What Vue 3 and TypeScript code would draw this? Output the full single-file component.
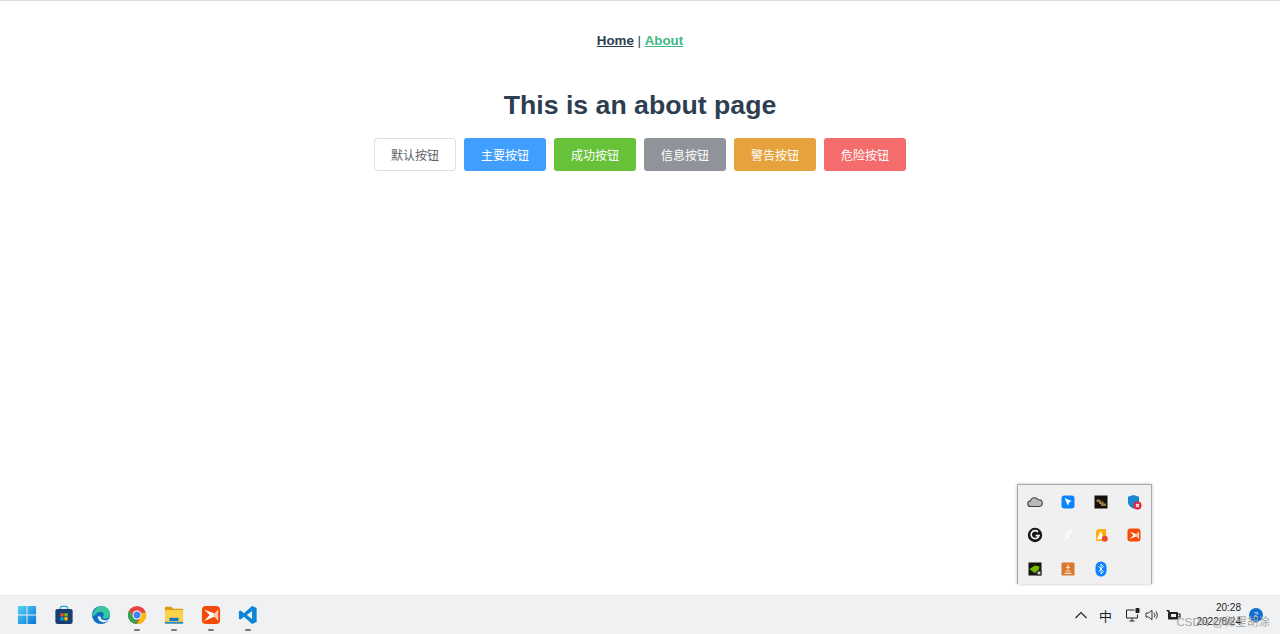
<script setup lang="ts">
const buttons = [
  { label: '默认按钮', kind: 'default' },
  { label: '主要按钮', kind: 'primary' },
  { label: '成功按钮', kind: 'success' },
  { label: '信息按钮', kind: 'info' },
  { label: '警告按钮', kind: 'warning' },
  { label: '危险按钮', kind: 'danger' },
]
</script>

<template>
  <div class="page">
    <main class="content">
      <nav class="nav">
        <a class="link home">Home</a><span class="sep"> | </span><a class="link about">About</a>
      </nav>
      <h1 class="title">This is an about page</h1>
      <div class="btns">
        <button v-for="b in buttons" :key="b.kind" class="btn" :class="b.kind">{{ b.label }}</button>
      </div>
    </main>

    <div class="tray-pop">
      <svg class="ti" viewBox="0 0 16 16"><path d="M3.800 12.500a2.800 2.800 0 0 1-.3-5.600A4.200 4.200 0 0 1 11.200 5.800a3.400 3.400 0 0 1 1.300 6.700z" fill="#b9b9b9" stroke="#444" stroke-width="1.100"/></svg>
      <svg class="ti" viewBox="0 0 16 16"><rect x="1.500" y="1.500" width="13" height="13" rx="3" fill="#0a84ff"/><path d="M4.500 4l7 3-2.500 1.500-1 3.500-1.500-3.500z" fill="#fff"/></svg>
      <svg class="ti" viewBox="0 0 16 16"><rect x="1.500" y="1.500" width="13" height="13" fill="#14110d"/><path d="M3.500 5.500h4v2h3v2h2.500v2.500H8v-2H6V8H3.500z" fill="#9a7b45"/></svg>
      <svg class="ti" viewBox="0 0 16 16"><path d="M7.500 1l5.500 1.800v5.400c0 3-2.500 5-5.500 6.500C4.500 13.200 2 11.200 2 8.200V2.800z" fill="#1a86d0"/><circle cx="11.500" cy="11.500" r="4" fill="#e81f3a"/><path d="M10 10l3 3M13 10l-3 3" stroke="#fff" stroke-width="1.100"/></svg>

      <svg class="ti" viewBox="0 0 16 16"><circle cx="8" cy="8" r="7.200" fill="#161616"/><path d="M11 4.800A4 4 0 1 0 12 8.600H8.600" fill="none" stroke="#f2f2f2" stroke-width="1.700"/></svg>
      <svg class="ti" viewBox="0 0 16 16"><path d="M11.500 1.500L5.500 7l1.200 1-2.700 6 4.500-3.500 1-1.500-1-1 3.500-3z" fill="#fcfcfc"/></svg>
      <svg class="ti" viewBox="0 0 16 16"><path d="M3 4l2-2h8v9l-2 3H3z" fill="#ffae12"/><path d="M3.500 12.500L8 4l2.500 8z" fill="#fff"/><circle cx="11.800" cy="11.800" r="3" fill="#ed4a2b"/></svg>
      <svg class="ti" viewBox="0 0 16 16"><rect x="1.500" y="1.500" width="13" height="13" rx="3" fill="#f44b0b"/><path d="M3.500 4.500L13 8.200 3.500 12l4-3.800z" fill="#fff"/><path d="M13 4.500v7.500l-4-3.800z" fill="#ffc9ad"/></svg>

      <svg class="ti" viewBox="0 0 16 16"><rect x="1.500" y="1.500" width="13" height="13" fill="#15170f"/><path d="M2.500 8l5.500-3.500 4.500 1-1 4-4 2.500z" fill="#76b900"/><rect x="9.500" y="9.500" width="5" height="5" fill="#3a3a3a"/><rect x="10.800" y="10.800" width="2.400" height="2.400" fill="#ddd"/></svg>
      <svg class="ti" viewBox="0 0 16 16"><rect x="1.500" y="1.500" width="13" height="13" rx="1" fill="#d9772c"/><path d="M4.500 12.300h7M5.500 10h5M8 3.500v5M6 6.500h4" stroke="#f7e3cf" stroke-width="1.200" fill="none"/></svg>
      <svg class="ti" viewBox="0 0 16 16"><rect x="2.500" y="0.500" width="11" height="15" rx="5.500" fill="#0a84ff"/><path d="M5.500 5.500l5 5L8 13V3l2.500 2.500-5 5" fill="none" stroke="#fff" stroke-width="0.900"/></svg>
    </div>

    <footer class="taskbar">
      <div class="apps">
        <span class="app">
          <svg viewBox="0 0 22 22" class="ai">
            <defs>
              <linearGradient id="win" x1="0" y1="0" x2="1" y2="1"><stop offset="0" stop-color="#52d2f7"/><stop offset="1" stop-color="#0a78d4"/></linearGradient>
            </defs>
            <path d="M1 2a1 1 0 0 1 1-1h8.500v9.500H1zM11.500 1H20a1 1 0 0 1 1 1v8.500h-9.500zM1 11.500h9.500V21H2a1 1 0 0 1-1-1zM11.500 11.500H21V20a1 1 0 0 1-1 1h-8.500z" fill="url(#win)"/>
          </svg>
        </span>
        <span class="app">
          <svg viewBox="0 0 22 22" class="ai"><path d="M7 5V3a1.500 1.500 0 0 1 1.500-1.500h5A1.500 1.500 0 0 1 15 3v2" fill="none" stroke="#2a9fd8" stroke-width="1.300"/><rect x="1.500" y="4.500" width="19" height="16.500" rx="2.500" fill="#173f73"/><rect x="7" y="9" width="3.600" height="3.600" fill="#f25022"/><rect x="11.400" y="9" width="3.600" height="3.600" fill="#7fba00"/><rect x="7" y="13.400" width="3.600" height="3.600" fill="#00a4ef"/><rect x="11.400" y="13.400" width="3.600" height="3.600" fill="#ffb900"/></svg>
        </span>
        <span class="app">
          <svg viewBox="0 0 22 22" class="ai"><circle cx="11" cy="11" r="10" fill="#0f6fc4"/><path d="M1.500 13C2 6 7 1 12 1c5.500 0 9 4.500 9 9.500 0 3-2.500 4.500-5 4.500-2 0-3.500-.8-3-2 .3-1 1.500-1.500 1-3.500C13.500 8 11.500 7 9.500 7.500 5 8.500 4 13 1.500 13z" fill="#37c8a0"/><path d="M7.500 12.500c0 4.500 3.500 7 7 6.500 2.500-.3 4.500-1.500 5.500-3.500-3 2-6.500 1.500-7.800.3C10.800 15 10.500 14 11 12.800z" fill="#eaf6ff"/></svg>
        </span>
        <span class="app dot">
          <svg viewBox="0 0 22 22" class="ai"><circle cx="11" cy="11" r="10" fill="#e8453c"/><path d="M11 21a10 10 0 0 1-8.660-15L7 13l4 2z" fill="#31a752"/><path d="M20.700 8.500A10 10 0 0 1 11 21l4-7 1-5.500z" fill="#fbbc05"/><circle cx="11" cy="11" r="5" fill="#fff"/><circle cx="11" cy="11" r="3.900" fill="#4285f4"/></svg>
        </span>
        <span class="app dot">
          <svg viewBox="0 0 22 22" class="ai"><path d="M1 3a1 1 0 0 1 1-1h6l2 2h10a1 1 0 0 1 1 1v3H1z" fill="#d99a0c"/><rect x="1" y="5.500" width="20" height="15" rx="1" fill="#fdd14a"/><rect x="6" y="14" width="10" height="3.500" rx=".5" fill="#1477c8"/><rect x="1" y="18.500" width="20" height="2" fill="#1b8ad6"/></svg>
        </span>
        <span class="app dot">
          <svg viewBox="0 0 22 22" class="ai"><rect x="1" y="1" width="20" height="20" rx="4.500" fill="#f24b09"/><path d="M3.500 5L19 11 3.500 17.500 9.500 11z" fill="#fff"/><path d="M19 5v12.500L13 11z" fill="#ffc9ad"/></svg>
        </span>
        <span class="app dot">
          <svg viewBox="0 0 22 22" class="ai"><path d="M15.500 1l5 2.400v15.200l-5 2.400L6.500 13 2.800 16 1 15V7l1.800-1 3.700 3z" fill="#0a86d8"/><path d="M15.500 6.500L9.600 11l5.900 4.500z" fill="#eff1f3"/></svg>
        </span>
      </div>
      <div class="sys">
        <svg class="si chev" viewBox="0 0 14 14"><path d="M1.500 10L7 4.500l5.500 5.500" fill="none" stroke="#222" stroke-width="1.100"/></svg>
        <span class="ime">中</span>
        <svg class="si net" viewBox="0 0 16 16"><path d="M9.500 3H1.500v8h11V7.500M4.500 14h5M7 11v3" fill="none" stroke="#222" stroke-width="1"/><rect x="10.500" y="1" width="4" height="5" rx=".8" fill="#222"/></svg>
        <svg class="si vol" viewBox="0 0 16 16"><path d="M2 6h2.500L8 3.300v9.400L4.500 10H2z" fill="none" stroke="#222" stroke-width=".9"/><path d="M10 5.800a3 3 0 0 1 0 4.400M11.800 4.200a5.500 5.500 0 0 1 0 7.600" fill="none" stroke="#222" stroke-width=".9"/></svg>
        <svg class="si bat" viewBox="0 0 16 16"><path d="M3 5l-2-2h3l1 2z" fill="#222"/><rect x="3" y="5" width="10" height="7.500" rx="1" fill="#222"/><rect x="6" y="7" width="5" height="3" fill="#eee"/><path d="M13 7h2v3h-2" stroke="#222" stroke-width="1.200" fill="none"/></svg>
        <div class="clock"><span>20:28</span><span>2022/6/24</span></div>
        <span class="badge">2</span>
      </div>
      <span class="mark">CSDN @稀里胡涂</span>
    </footer>
  </div>
</template>

<style>
html, body { margin: 0; background: #fff; }
</style>

<style scoped>
.page {
  position: relative;
  width: 1280px;
  height: 634px;
  overflow: hidden;
  display: flex;
  flex-direction: column;
  background: #fff;
  border-top: 1px solid #dcdcdc;
  box-sizing: border-box;
  font-family: "Liberation Sans", Arial, "Noto Sans CJK SC", sans-serif;
  color: #2c3e50;
}
.content { flex: 1; display: flex; flex-direction: column; align-items: center; }
.nav { margin-top: 31px; font-size: 13.330px; line-height: 17px; height: 17px; }
.link { font-weight: 700; text-decoration: underline; }
.home { color: #2c3e50; }
.about { color: #42b983; }
.title { margin: 40px 0 0; font-size: 26.670px; line-height: 33px; font-weight: 700; }
.btns { display: flex; gap: 8px; margin-top: 16px; }
.btn {
  width: 82px;
  height: 33px;
  padding: 0;
  border-radius: 3px;
  border: 1px solid transparent;
  color: #fff;
  font-family: "Noto Sans CJK SC", sans-serif;
  font-size: 12px;
  box-sizing: border-box;
}
.default { background: #fff; border-color: #dcdfe6; color: #606266; }
.primary { background: #409eff; }
.success { background: #67c23a; }
.info { background: #909399; }
.warning { background: #e6a23c; }
.danger { background: #f56c6c; }
.taskbar {
  height: 39px;
  flex: none;
  background: #f0f1f2;
  border-top: 1px solid #e8e8e8;
  box-sizing: border-box;
  display: flex;
  align-items: center;
  justify-content: space-between;
  position: relative;
}
.apps { display: flex; gap: 16.830px; padding-left: 17px; }
.app { position: relative; width: 20px; height: 20px; display: block; }
.ai { width: 20px; height: 20px; display: block; }
.dot::after {
  content: "";
  position: absolute;
  left: 7px;
  bottom: -6px;
  width: 6px;
  height: 2px;
  border-radius: 1px;
  background: #7a7a7a;
}
.sys { display: flex; align-items: center; padding-right: 17px; color: #1c1c1c; }
.si { display: block; }
.chev { width: 14px; height: 14px; margin-right: 11px; }
.ime { font-family: "Noto Sans CJK SC", sans-serif; font-size: 13px; width: 14px; margin-right: 12px; }
.net { width: 16px; height: 16px; margin-right: 3px; }
.vol { width: 16px; height: 16px; margin-right: 5px; }
.bat { width: 16px; height: 16px; margin-right: 14px; }
.clock { display: flex; flex-direction: column; align-items: flex-end; font-size: 10px; line-height: 14px; width: 46px; }
.badge {
  width: 14px; height: 14px; margin-left: 8px; border-radius: 50%;
  background: #0f6cd0; color: #fff; font-size: 8px; line-height: 14px; text-align: center;
}
.mark {
  position: absolute;
  right: 10px;
  top: 19px;
  font-size: 11.500px;
  line-height: 14px;
  color: #a6a6a6;
  font-family: "Liberation Sans", "Noto Sans CJK SC", sans-serif;
}
.tray-pop {
  position: absolute;
  left: 1017px;
  top: 483px;
  width: 135px;
  height: 100px;
  box-sizing: border-box;
  background: #f0f0f0;
  border: 1px solid #a9a9a9;
  border-bottom: none;
  box-shadow: 0 0 3px rgba(0,0,0,.25);
  display: grid;
  grid-template-columns: repeat(4, 33.250px);
  grid-template-rows: repeat(3, 33.500px);
  justify-items: center;
  align-items: center;
}
.ti { width: 16px; height: 16px; display: block; }
</style>
